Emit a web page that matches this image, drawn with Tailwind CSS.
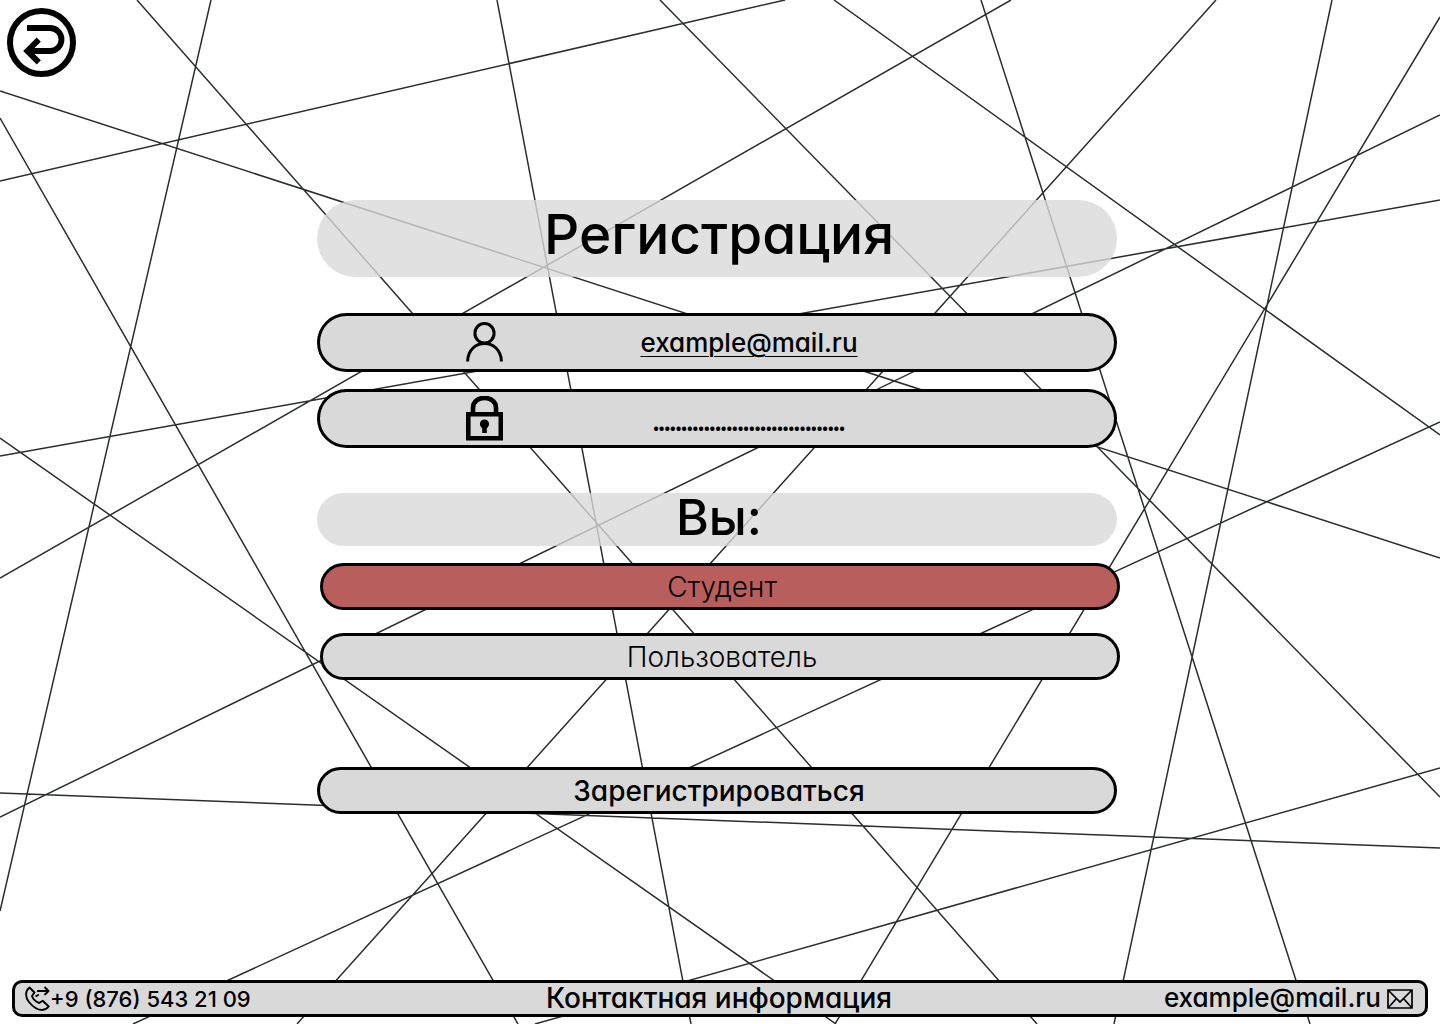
<!DOCTYPE html>
<html lang="ru">
<head>
<meta charset="utf-8">
<meta name="viewport" content="width=device-width, initial-scale=1">
<title>Регистрация</title>
<script src="https://cdn.jsdelivr.net/npm/@tailwindcss/browser@4"></script>
</head>
<body class="bg-white text-black font-['Inter',sans-serif] [font-feature-settings:'cv11']">
<div class="relative isolate flex min-h-screen flex-col">

  <!-- Decorative line pattern -->
  <svg class="absolute inset-0 -z-10 h-full w-full" viewBox="0 0 1440 1024" preserveAspectRatio="none" fill="none" stroke="#2b2e2e" stroke-width="1.5" aria-hidden="true">
    <path d="M137 0L1037 1024M211 0L0 911M0 91L1440 558M0 181L785 0M0 118L518 1024M0 456L1440 200M0 578L1011 0M0 438L836 1024M0 817L1440 115M0 793L1440 848M497 0L691 1024M660 0L1440 797M834 0L1440 435M981 0L1310 1024M1216 0L297 1024M1332 0L1114 1024M1440 17L835 1024M1440 422L133 1024M1440 768L535 1024"/>
  </svg>

  <header class="h-[200px] px-[7px] pt-2">
    <a href="#" aria-label="Назад" class="block size-[69px]">
      <svg class="size-full" viewBox="7 8 69 69" fill="none" stroke="#000" aria-hidden="true">
        <circle cx="41.5" cy="42.5" r="31.5" stroke-width="6" fill="#fff"/>
        <path d="M27 28H50A11.5 11.5 0 0 1 50 51H27M38.8 39.6L27.3 51L38.8 62.4" stroke-width="5.8"/>
      </svg>
    </a>
  </header>

  <main class="mx-auto w-full max-w-[806px] flex-1">
    <form>
      <h1 class="mr-1.5 flex h-[77px] items-center justify-center rounded-full bg-[#d9d9d9]/80 pb-2 pl-1 text-[55px] font-medium">Регистрация</h1>

      <div class="mt-9 mr-1.5 flex h-[59px] items-center rounded-full border-3 border-black bg-[#d9d9d9] pr-[119px] pl-[146px]">
        <label for="email" class="shrink-0">
          <svg class="h-[45px] w-[37px]" viewBox="466 320 37 45" fill="none" stroke="#000" stroke-width="3" aria-hidden="true">
            <ellipse cx="484.5" cy="333.3" rx="9.6" ry="9.8"/>
            <path d="M467.6 361.5C468 337.5 501 337.5 501.4 361.5"/>
          </svg>
        </label>
        <input id="email" type="email" aria-label="Почта" value="example@mail.ru" class="min-w-0 flex-1 text-center text-[26px] font-medium underline decoration-1 underline-offset-4 outline-none">
      </div>

      <div class="mt-[17px] mr-1.5 flex h-[59px] items-center rounded-full border-3 border-black bg-[#d9d9d9] pr-[119px] pl-[146px]">
        <label for="password" class="shrink-0">
          <svg class="h-[45px] w-[37px]" viewBox="466 396 37 45" fill="none" stroke="#000" aria-hidden="true">
            <path d="M468.3 414.2H500.8V438.3H468.3Z" stroke-width="4.600"/>
            <path d="M473 413V408C473 394.500 496 394.500 496 408V413" stroke-width="4.600"/>
            <circle cx="484.500" cy="424" r="4.600" fill="#000" stroke="none"/>
            <path d="M484.500 424V433" stroke-width="4.600"/>
          </svg>
        </label>
        <input id="password" type="password" aria-label="Пароль" value="0123456789012345678901234567890123" class="min-w-0 flex-1 pt-5 text-center font-['Open_Sans',sans-serif] text-[15px] font-bold outline-none">
      </div>

      <h2 id="role" class="mt-[45px] mr-1.5 flex h-[53px] items-center justify-center rounded-full bg-[#d9d9d9]/80 pb-1 pl-1 text-[50px] font-medium">Вы:</h2>

      <div role="group" aria-labelledby="role" class="mt-[17px] flex flex-col gap-[23px] px-[3px] text-[28px] font-light">
        <button type="button" aria-pressed="true" class="h-[47px] rounded-full border-3 border-black bg-[#b85f5d] pl-1">Студент</button>
        <button type="button" aria-pressed="false" class="h-[47px] rounded-full border-3 border-black bg-[#d9d9d9] pl-1">Пользователь</button>
      </div>

      <div class="mt-[87px] mr-1.5 flex">
        <button type="submit" class="h-[47px] flex-1 rounded-full border-3 border-black bg-[#d9d9d9] pb-1 pl-1 text-[28px] font-medium">Зарегистрироваться</button>
      </div>
    </form>
  </main>

  <footer class="mx-3 mb-[7px] grid h-[37px] grid-cols-[1fr_auto_1fr] items-center rounded-[10px] border-3 border-black bg-[#d9d9d9] pr-3 pl-2.5 text-[26px] leading-7 font-medium">
    <a href="tel:+98765432109" class="flex items-center">
      <svg class="size-[25px] shrink-0" viewBox="25 986 25 25" fill="none" stroke="#000" stroke-width="1.900" stroke-linejoin="round" aria-hidden="true">
        <path d="M29.500 987.500C25 991 25 997 29 1002C33 1007 38 1010 42 1010C45 1010 47 1008.500 48.700 1006.500L42.700 1000.700L39.200 1003C36.500 1002 33 999 32 996L34.500 992.500Z"/>
        <path d="M37 991H48.500M44.500 987L48.500 991L44.500 995M35.500 996.500L39 994.500"/>
      </svg>
      <span class="text-[22px]">+9 (876) 543 21 09</span>
    </a>
    <span class="pb-0.5 text-[28px]">Контактная информация</span>
    <a href="mailto:example@mail.ru" class="flex items-center gap-1.5 justify-self-end">
      <span class="pb-0.5">example@mail.ru</span>
      <svg class="h-5 w-[26px] shrink-0" viewBox="0 0 26 20" fill="none" stroke="#000" stroke-width="1.700" aria-hidden="true">
        <path d="M1 1H25V19H1ZM1 1L13 13L25 1M1 19L9.500 9.500M25 19L16.500 9.500"/>
      </svg>
    </a>
  </footer>
</div>
</body>
</html>
